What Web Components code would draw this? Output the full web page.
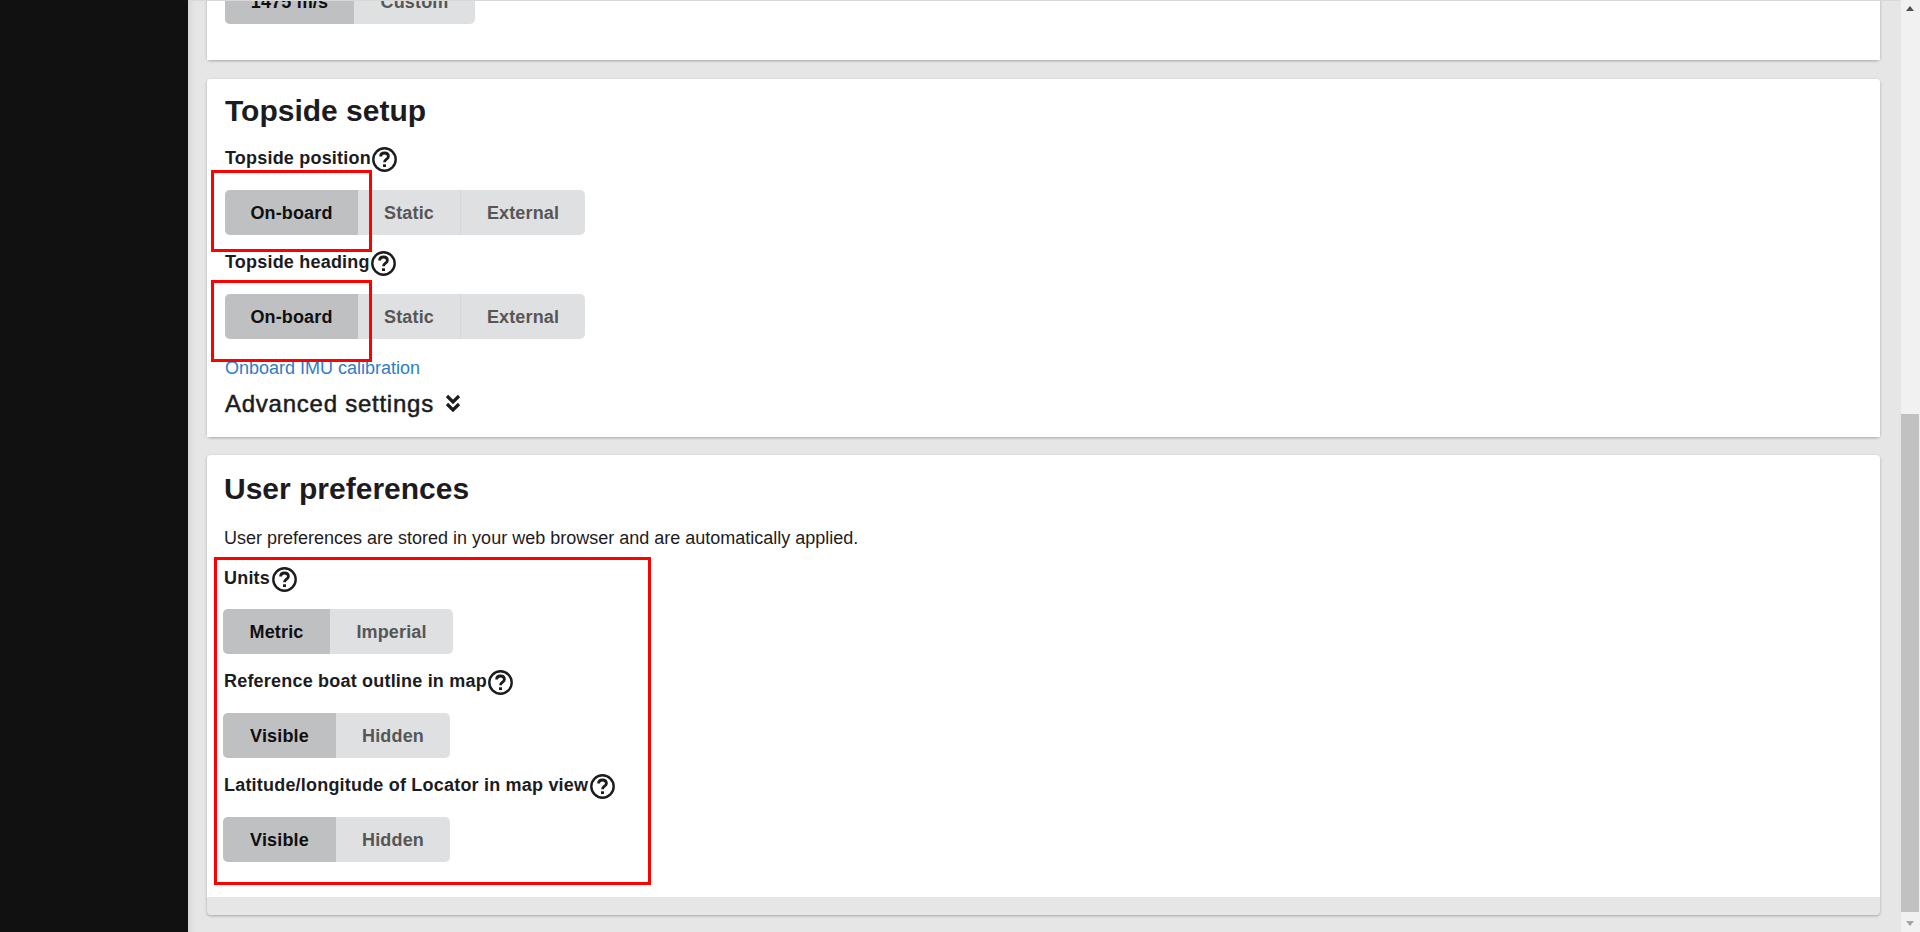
<!DOCTYPE html>
<html>
<head>
<meta charset="utf-8">
<title>Settings</title>
<style>
html, body { margin: 0; height: 100%; overflow: hidden; }
body { font-family: "Liberation Sans", Arial, sans-serif; color: #1c1c1e; background: #e6e6e6; }
</style>
</head>
<body>
<app-shell>
  <settings-card flush>
    <toggle-group>
      <toggle-option active w="129">1475 m/s</toggle-option>
      <toggle-option w="121">Custom</toggle-option>
    </toggle-group>
  </settings-card>

  <settings-card heading="Topside setup">
    <red-mark style="left:4px;top:91px;width:161px;height:82px"></red-mark>
    <red-mark style="left:4px;top:201px;width:161px;height:82px"></red-mark>
    <field-label>Topside position</field-label>
    <toggle-group>
      <toggle-option active w="133">On-board</toggle-option>
      <toggle-option w="102">Static</toggle-option>
      <toggle-option w="125">External</toggle-option>
    </toggle-group>
    <field-label>Topside heading</field-label>
    <toggle-group>
      <toggle-option active w="133">On-board</toggle-option>
      <toggle-option w="102">Static</toggle-option>
      <toggle-option w="125">External</toggle-option>
    </toggle-group>
    <a-link>Onboard IMU calibration</a-link>
    <advanced-toggle>Advanced settings</advanced-toggle>
  </settings-card>

  <settings-card heading="User preferences" wide footer>
    <red-mark style="left:7px;top:102px;width:437px;height:328px"></red-mark>
    <p-text>User preferences are stored in your web browser and are automatically applied.</p-text>
    <field-label style="margin-bottom:17px">Units</field-label>
    <toggle-group>
      <toggle-option active w="107">Metric</toggle-option>
      <toggle-option w="123">Imperial</toggle-option>
    </toggle-group>
    <field-label>Reference boat outline in map</field-label>
    <toggle-group>
      <toggle-option active w="113">Visible</toggle-option>
      <toggle-option w="114">Hidden</toggle-option>
    </toggle-group>
    <field-label>Latitude/longitude of Locator in map view</field-label>
    <toggle-group>
      <toggle-option active w="113">Visible</toggle-option>
      <toggle-option w="114">Hidden</toggle-option>
    </toggle-group>
  </settings-card>
</app-shell>

<script>
function shadow(el, html) {
    el.attachShadow({ mode: 'open' });
    el.shadowRoot.innerHTML = html;
}

class AppShell extends HTMLElement {
    constructor() {
        super();
        shadow(this, `
<style>
:host { display: grid; grid-template-columns: 188px 1fr 20px; height: 932px; }
.side { background: #111; }
.main { overflow: hidden; border-top: 1px solid #d8d8d8; background: #e6e6e6; box-shadow: inset 9px 0 9px -9px rgba(0,0,0,.14); }
.stack { display: flex; flex-direction: column; gap: 19px; padding: 0 20px 0 19px; margin-top: -22px; }
::slotted(settings-card[wide]) { margin-top: -1px; }
.bar { background: #f1f1f1; display: flex; flex-direction: column; justify-content: space-between; border-left: 1px solid #e4e4e4; box-sizing: border-box; }
.arrow { height: 17px; margin-right: 1px; display: flex; align-items: center; justify-content: center; }
.arrow i { width: 0; height: 0; border: 4px solid transparent; }
.up i { border-bottom: 5px solid #505050; border-top: 0; }
.down i { border-top: 5px solid #a3a3a3; border-bottom: 0; }
.track { flex: 1; display: flex; flex-direction: column; justify-content: flex-end; padding: 0 1px 3px 0; }
.thumb { height: 498px; background: #c1c1c1; }
</style>
<div class="side"></div>
<div class="main"><div class="stack"><slot></slot></div></div>
<div class="bar">
  <div class="arrow up"><i></i></div>
  <div class="track"><div class="thumb"></div></div>
  <div class="arrow down"><i></i></div>
</div>`);
    }
}

class SettingsCard extends HTMLElement {
    constructor() {
        super();
        const heading = this.getAttribute('heading');
        shadow(this, `
<style>
:host { display: block; position: relative; border-radius: 4px; box-shadow: 0 1px 3px rgba(0,0,0,.28); background: #fff; }
:host([footer]) { background: #e6e6e6; }
.inner { background: #fff; padding: 15px 18px 19px 18px; border-radius: 4px 4px 0 0; }
:host([flush]) .inner { padding: 0 18px 20px; }
:host([wide]) .inner { padding: 17px 18px 19px 17px; }
:host([wide]) ::slotted(toggle-group) { margin-left: -1px; }
:host([footer]) .foot { height: 18px; }
h2 { margin: 0 0 19px; font-size: 30px; line-height: 34px; font-weight: 700; color: #1c1c1e; }
:host([wide]) h2 { margin-bottom: 20px; }
</style>
<div class="inner">
  ${heading ? `<h2>${heading}</h2>` : ''}
  <slot></slot>
</div>
<div class="foot"></div>`);
    }
}

class FieldLabel extends HTMLElement {
    constructor() {
        super();
        shadow(this, `
<style>
:host { display: flex; align-items: center; height: 25px; margin-bottom: 18px; font-size: 18px; font-weight: 700; letter-spacing: .2px; color: #1c1c1e; }
span { margin-top: -3px; }
svg { width: 27px; height: 27px; margin-left: .5px; flex: none; }
</style>
<span><slot></slot></span>
<svg viewBox="0 0 27 27" fill="none" stroke="#1c1c1e" stroke-width="2.4">
  <circle cx="13.5" cy="13.5" r="11.2"/>
  <path d="M9.6 10.6c0-2.2 1.7-3.6 3.9-3.6s3.9 1.3 3.9 3.4c0 2.7-3.9 2.8-3.9 5.8" stroke-width="2.8"/>
  <path d="M13.5 18.3v2.7" stroke-width="3"/>
</svg>`);
    }
}

class ToggleGroup extends HTMLElement {
    constructor() {
        super();
        shadow(this, `
<style>
:host { display: flex; width: max-content; height: 45px; margin-bottom: 16px; border-radius: 5px; overflow: hidden; background: #dfe0e2; }
</style>
<slot></slot>`);
    }
}

class ToggleOption extends HTMLElement {
    constructor() {
        super();
        shadow(this, `
<style>
:host { display: flex; align-items: center; justify-content: center; box-sizing: border-box; width: ${this.getAttribute('w')}px; padding-top: 1px; font-size: 18px; font-weight: 700; letter-spacing: .15px; color: #565656; border-left: 1px solid #d6d7d9; }
:host(:first-child), :host(:nth-child(2)) { border-left: 0; }
:host([active]) { background: #bfc0c2; color: #0f0f10; }
</style>
<slot></slot>`);
    }
}

class ALink extends HTMLElement {
    constructor() {
        super();
        shadow(this, `
<style>
:host { display: block; margin-top: 17px; font-size: 18px; line-height: 24px; color: #2f7cc9; }
</style>
<slot></slot>`);
    }
}

class AdvancedToggle extends HTMLElement {
    constructor() {
        super();
        shadow(this, `
<style>
:host { display: flex; align-items: center; gap: 9px; margin-top: 10px; height: 28px; font-size: 24px; font-weight: 400; letter-spacing: .75px; color: #1c1c1e; -webkit-text-stroke: .5px #1c1c1e; }
svg { width: 20px; height: 20px; }
</style>
<span><slot></slot></span>
<svg viewBox="0 0 20 20" fill="none" stroke="#1c1c1e" stroke-width="3.2">
  <path d="M4 2l6 6 6-6"/>
  <path d="M4 10l6 6 6-6"/>
</svg>`);
    }
}

class PText extends HTMLElement {
    constructor() {
        super();
        shadow(this, `
<style>
:host { display: block; margin-bottom: 17px; font-size: 18px; line-height: 24px; color: #1c1c1e; }
</style>
<slot></slot>`);
    }
}

class RedMark extends HTMLElement {
    constructor() {
        super();
        shadow(this, `
<style>
:host { display: block; position: absolute; box-sizing: border-box; border: 3px solid #f00; pointer-events: none; z-index: 2; }
</style>`);
    }
}

customElements.define('app-shell', AppShell);
customElements.define('settings-card', SettingsCard);
customElements.define('field-label', FieldLabel);
customElements.define('toggle-group', ToggleGroup);
customElements.define('toggle-option', ToggleOption);
customElements.define('a-link', ALink);
customElements.define('advanced-toggle', AdvancedToggle);
customElements.define('p-text', PText);
customElements.define('red-mark', RedMark);
</script>
</body>
</html>
